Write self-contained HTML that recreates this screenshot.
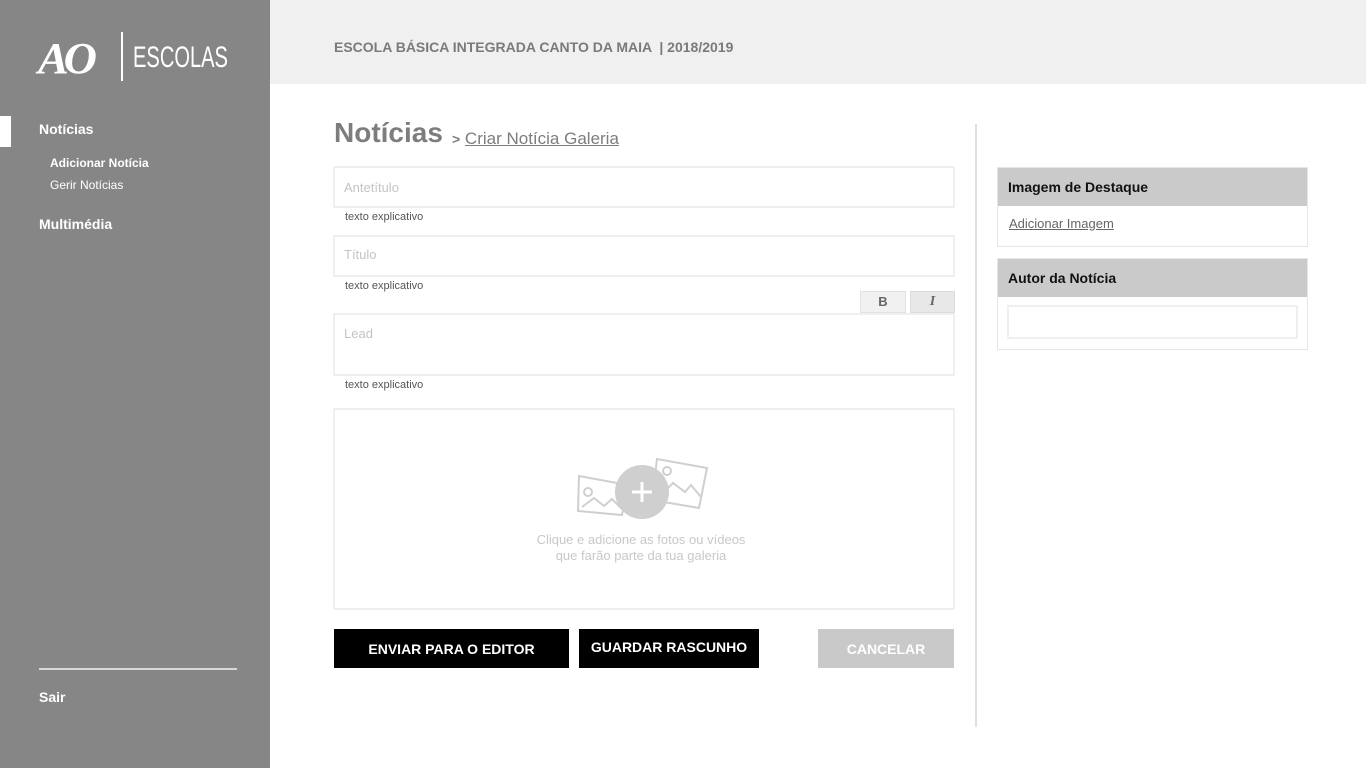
<!DOCTYPE html>
<html><head><meta charset="utf-8"><style>
*{margin:0;padding:0;box-sizing:border-box}
body{width:1366px;height:768px;position:relative;background:#fff;font-family:"Liberation Sans","DejaVu Sans",sans-serif;overflow:hidden}
.a{position:absolute}
.side{left:0;top:0;width:270px;height:768px;background:#868686}
.top{left:270px;top:0;width:1096px;height:84px;background:#f0f0f0}
.inp{border:2px solid #efefef;background:#fff;color:#c4c4c4;font-size:13px;padding-left:9px}
.help{font-size:11px;color:#555}
.btn{color:#fff;font-weight:bold;font-size:14px;text-align:center}
.panel{border:1px solid #e6e6e6;background:#fff}
.ph{background:#cacaca;font-weight:bold;font-size:14px;color:#111;padding-left:10px;line-height:38px;height:38px}
</style></head><body>
<div class="a side"></div>
<div class="a top"></div>
<div class="a" style="left:38px;top:33px;color:#fff;font:bold italic 44px 'Liberation Serif',serif;letter-spacing:-5px;transform:scaleX(1.05);transform-origin:left">AO</div>
<div class="a" style="left:121px;top:32px;width:2px;height:49px;background:#fff"></div>
<div class="a" style="left:133px;top:41px;color:#fff;font-size:30px;transform:scaleX(0.67);transform-origin:left;white-space:nowrap">ESCOLAS</div>
<div class="a" style="left:0;top:116px;width:11px;height:31px;background:#fff"></div>
<div class="a" style="left:39px;top:121px;color:#fff;font-weight:bold;font-size:14px">Notícias</div>
<div class="a" style="left:50px;top:156px;color:#fff;font-weight:bold;font-size:12px">Adicionar Notícia</div>
<div class="a" style="left:50px;top:178px;color:#fff;font-size:12px">Gerir Notícias</div>
<div class="a" style="left:39px;top:216px;color:#fff;font-weight:bold;font-size:14px">Multimédia</div>
<div class="a" style="left:39px;top:668px;width:198px;height:2px;background:#d8d8d8"></div>
<div class="a" style="left:39px;top:689px;color:#fff;font-weight:bold;font-size:14px">Sair</div>

<div class="a" style="left:334px;top:39px;color:#7a7a7a;font-weight:bold;font-size:14px">ESCOLA BÁSICA INTEGRADA CANTO DA MAIA &nbsp;| 2018/2019</div>

<div class="a" style="left:334px;top:117px;color:#7d7d7d;font-weight:bold;font-size:28px">Notícias</div>
<div class="a" style="left:452px;top:129px;color:#7d7d7d;font-size:17px"><b style="font-size:14px">&gt;</b> <u>Criar Notícia Galeria</u></div>

<div class="a inp" style="left:333px;top:166px;width:622px;height:42px;line-height:40px">Antetítulo</div>
<div class="a help" style="left:345px;top:211px">texto explicativo</div>
<div class="a inp" style="left:333px;top:235px;width:622px;height:42px;line-height:36px">Título</div>
<div class="a help" style="left:345px;top:280px">texto explicativo</div>
<div class="a" style="left:860px;top:291px;width:46px;height:22px;background:#f1f1f1;border:1px solid #e2e2e2;text-align:center;font-weight:bold;font-size:13px;color:#666;line-height:20px">B</div>
<div class="a" style="left:910px;top:291px;width:45px;height:22px;background:#e8e8e8;border:1px solid #dcdcdc;text-align:center;font-style:italic;font-weight:bold;font-size:14px;color:#666;line-height:20px;font-family:'Liberation Serif',serif">I</div>
<div class="a inp" style="left:333px;top:313px;width:622px;height:63px;padding-top:11px">Lead</div>
<div class="a help" style="left:345px;top:379px">texto explicativo</div>

<div class="a" style="left:333px;top:408px;width:622px;height:202px;border:2px solid #efefef"></div>
<svg class="a" style="left:575px;top:455px" width="135" height="66" viewBox="0 0 135 66">
<g fill="#fff" stroke="#cfcfcf" stroke-width="2">
<polygon points="4,21 53,30 47,60 3,56"/>
<polygon points="82,4 132,13 124,53 77,45"/>
</g>
<g fill="none" stroke="#cfcfcf" stroke-width="2">
<circle cx="13" cy="37" r="4"/><polyline points="7,52 19,43 29,51 37,44 48,55"/>
<circle cx="92" cy="16" r="4"/><polyline points="88,38 98,28 110,37 116,30 126,42"/>
</g>
<circle cx="67" cy="37" r="27" fill="#cfcfcf"/>
<path d="M67 27v20M57 37h20" stroke="#fff" stroke-width="3"/>
</svg>
<div class="a" style="left:334px;top:532px;width:614px;text-align:center;color:#c8c8c8;font-size:13px;line-height:16px">Clique e adicione as fotos ou vídeos<br>que farão parte da tua galeria</div>

<div class="a btn" style="left:334px;top:629px;width:235px;height:39px;background:#000;line-height:40px">ENVIAR PARA O EDITOR</div>
<div class="a btn" style="left:579px;top:629px;width:180px;height:39px;background:#000;line-height:37px">GUARDAR RASCUNHO</div>
<div class="a btn" style="left:818px;top:629px;width:136px;height:39px;background:#c9c9c9;line-height:40px">CANCELAR</div>

<div class="a" style="left:975px;top:124px;width:2px;height:603px;background:#e0e0e0"></div>

<div class="a panel" style="left:997px;top:167px;width:311px;height:80px">
<div class="ph">Imagem de Destaque</div>
<div style="padding:10px 0 0 11px;font-size:13px;color:#666;text-decoration:underline">Adicionar Imagem</div></div>
<div class="a panel" style="left:997px;top:258px;width:311px;height:92px">
<div class="ph">Autor da Notícia</div>
<div style="margin:8px 9px 0 9px;height:34px;border:2px solid #efefef"></div></div>
</body></html>
